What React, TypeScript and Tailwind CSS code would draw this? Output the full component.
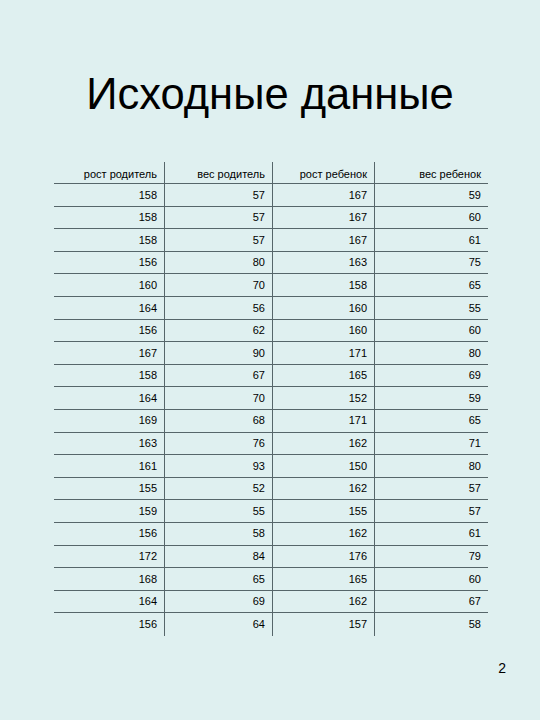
const headers = ['рост родитель', 'вес родитель', 'рост ребенок', 'вес ребенок']

const rows: number[][] = [
  [158, 57, 167, 59],
  [158, 57, 167, 60],
  [158, 57, 167, 61],
  [156, 80, 163, 75],
  [160, 70, 158, 65],
  [164, 56, 160, 55],
  [156, 62, 160, 60],
  [167, 90, 171, 80],
  [158, 67, 165, 69],
  [164, 70, 152, 59],
  [169, 68, 171, 65],
  [163, 76, 162, 71],
  [161, 93, 150, 80],
  [155, 52, 162, 57],
  [159, 55, 155, 57],
  [156, 58, 162, 61],
  [172, 84, 176, 79],
  [168, 65, 165, 60],
  [164, 69, 162, 67],
  [156, 64, 157, 58],
]

export default function App() {
  return (
    <div
      className="w-[540px] h-[720px] bg-[#dff0f0] text-black overflow-hidden"
      style={{ fontFamily: '"Liberation Sans", Arial, sans-serif' }}
    >
      {/* Заголовок */}
      <h1 className="pt-[68px] text-center text-[43.5px] leading-[52px] font-normal">
        Исходные данные
      </h1>

      {/* Таблица */}
      <div className="mt-[42px] ml-[54px] w-[434px] grid grid-cols-[111px_108px_102px_113px] text-[11px]">
        {headers.map((h, i) => (
          <div
            key={h}
            className={`h-[22px] pt-[3px] flex items-center justify-end pr-[7px] border-b border-[#56666a] ${
              i < 3 ? 'border-r' : ''
            }`}
          >
            {h}
          </div>
        ))}
        {rows.map((row, r) =>
          row.map((v, i) => (
            <div
              key={`${r}-${i}`}
              className={`h-[22.6px] flex items-center justify-end pr-[7px] border-[#56666a] ${
                i < 3 ? 'border-r' : ''
              } ${r < rows.length - 1 ? 'border-b' : ''}`}
            >
              {v}
            </div>
          ))
        )}
      </div>

      {/* Номер слайда */}
      <div className="mt-[24px] pr-[34px] flex justify-end text-[14px] leading-[16px]">2</div>
    </div>
  )
}
